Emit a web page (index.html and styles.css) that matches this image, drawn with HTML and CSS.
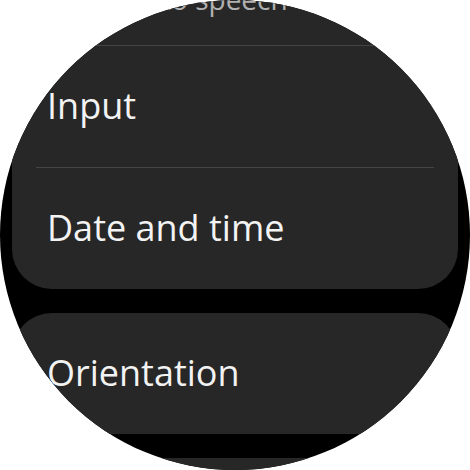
FILE: index.html
```html
<!DOCTYPE html>
<html lang="en">
<head>
<meta charset="utf-8">
<title>System</title>
<link rel="stylesheet" href="styles.css">
</head>
<body>
<div class="watch">
  <div class="list">
    <section class="card card-first">
      <div class="row row-faded"><span class="label label-small">Text to speech</span></div>
      <div class="divider"></div>
      <div class="row"><span class="label">Input</span></div>
      <div class="divider"></div>
      <div class="row"><span class="label">Date and time</span></div>
    </section>
    <section class="card">
      <div class="row"><span class="label">Orientation</span></div>
    </section>
    <section class="card card-next"></section>
  </div>
</div>
</body>
</html>
```
FILE: styles.css
```css
html, body {
  margin: 0;
  padding: 0;
  background: #ffffff;
}

.watch {
  width: 470px;
  height: 470px;
  border-radius: 50%;
  overflow: hidden;
  background: #000000;
  font-family: "Open Sans", "Liberation Sans", sans-serif;
}

.list {
  display: flex;
  flex-direction: column;
  gap: 24px;
  padding: 0 12px;
  margin-top: -76px;
}

.card {
  background: #272727;
  border-radius: 40px;
  display: flex;
  flex-direction: column;
}

.card-next {
  height: 121px;
}

.row {
  padding: 36px 24px 37px 35px;
  display: flex;
  align-items: center;
}

.row-faded {
  padding: 57px 24px 28px 86px;
}

.label {
  font-size: 36px;
  line-height: 48px;
  color: #f3f3f3;
  white-space: nowrap;
}

.label-small {
  font-size: 28px;
  line-height: 36px;
  color: #b0b0b0;
}

.divider {
  height: 1px;
  margin: 0 24px;
  background: #464442;
}
```
